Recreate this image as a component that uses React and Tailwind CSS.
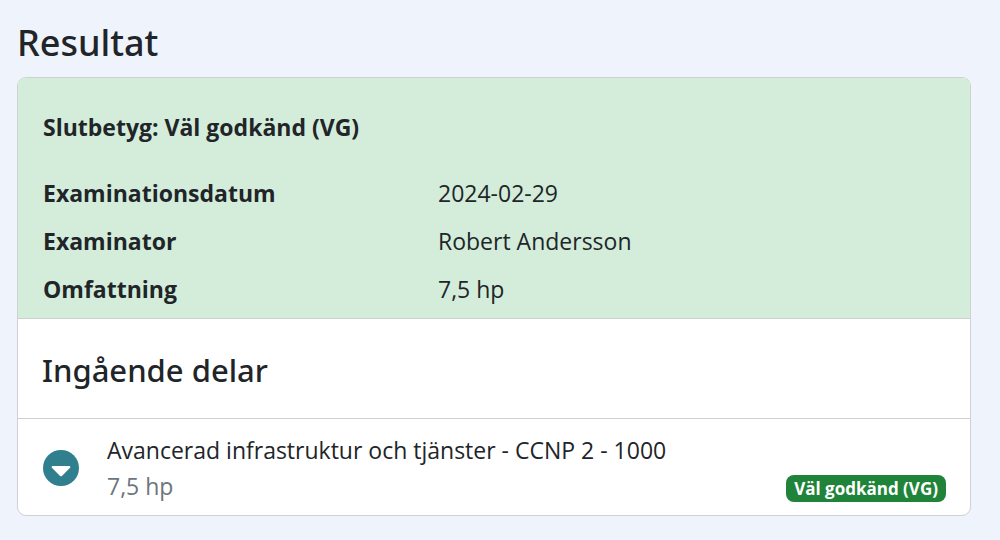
import { useState } from "react";

const details = [
  { label: "Examinationsdatum", value: "2024-02-29" },
  { label: "Examinator", value: "Robert Andersson" },
  { label: "Omfattning", value: "7,5 hp" },
];

const parts = [
  {
    name: "Avancerad infrastruktur och tjänster - CCNP 2 - 1000",
    credits: "7,5 hp",
    grade: "Väl godkänd (VG)",
  },
];

function Part({ part }) {
  const [open, setOpen] = useState(false);

  return (
    <li className="flex items-center gap-7 border-t border-[#cfd0d2] pt-[13px] pr-6 pb-[11px] pl-[25px]">
      <button
        type="button"
        aria-label={part.name}
        aria-expanded={open}
        onClick={() => setOpen(!open)}
        className="size-9 shrink-0 rounded-full bg-[#2f7f8f]"
      >
        <svg viewBox="0 0 36 36" className="size-9" fill="#fff" aria-hidden="true">
          <path d="M9.7 16h16.6c1 0 1.5 1.1.8 1.8l-8.2 8.1c-.5.5-1.3.5-1.8 0l-8.2-8.1c-.7-.7-.2-1.8.8-1.8z" />
        </svg>
      </button>
      <div className="grow">
        <div>{part.name}</div>
        <div className="flex items-end justify-between text-[#6c757d]">
          <span>{part.credits}</span>
          <span className="mb-0.5 rounded-lg bg-[#20833a] px-2 text-[17px] leading-[27px] font-bold text-white">
            {part.grade}
          </span>
        </div>
      </div>
    </li>
  );
}

export default function App() {
  return (
    <main className="min-h-screen bg-[#eff3fb] pt-[18px] pr-[29px] pb-6 pl-[17px] font-['Open_Sans',sans-serif] text-[23px] leading-9 text-[#212529]">
      <h1 className="mb-2.5 font-['Noto_Sans',sans-serif] text-[36px] leading-[49px] font-medium">
        Resultat
      </h1>

      <section className="overflow-hidden rounded-[9px] border border-[#cfd0d2] bg-white">
        <div className="bg-[#d4edda] px-[25px] pt-[31px] pb-[11px]">
          <h2 className="mb-[30px] font-bold">Slutbetyg: Väl godkänd (VG)</h2>
          <dl className="space-y-3">
            {details.map((d) => (
              <div key={d.label} className="flex">
                <dt className="w-[395px] shrink-0 font-bold">{d.label}</dt>
                <dd>{d.value}</dd>
              </div>
            ))}
          </dl>
        </div>

        <h2 className="border-t border-[#cfd0d2] px-6 pt-[31px] pb-7 font-['Noto_Sans',sans-serif] text-[31px] leading-10 font-medium">
          Ingående delar
        </h2>

        <ul>
          {parts.map((part) => (
            <Part key={part.name} part={part} />
          ))}
        </ul>
      </section>
    </main>
  );
}
